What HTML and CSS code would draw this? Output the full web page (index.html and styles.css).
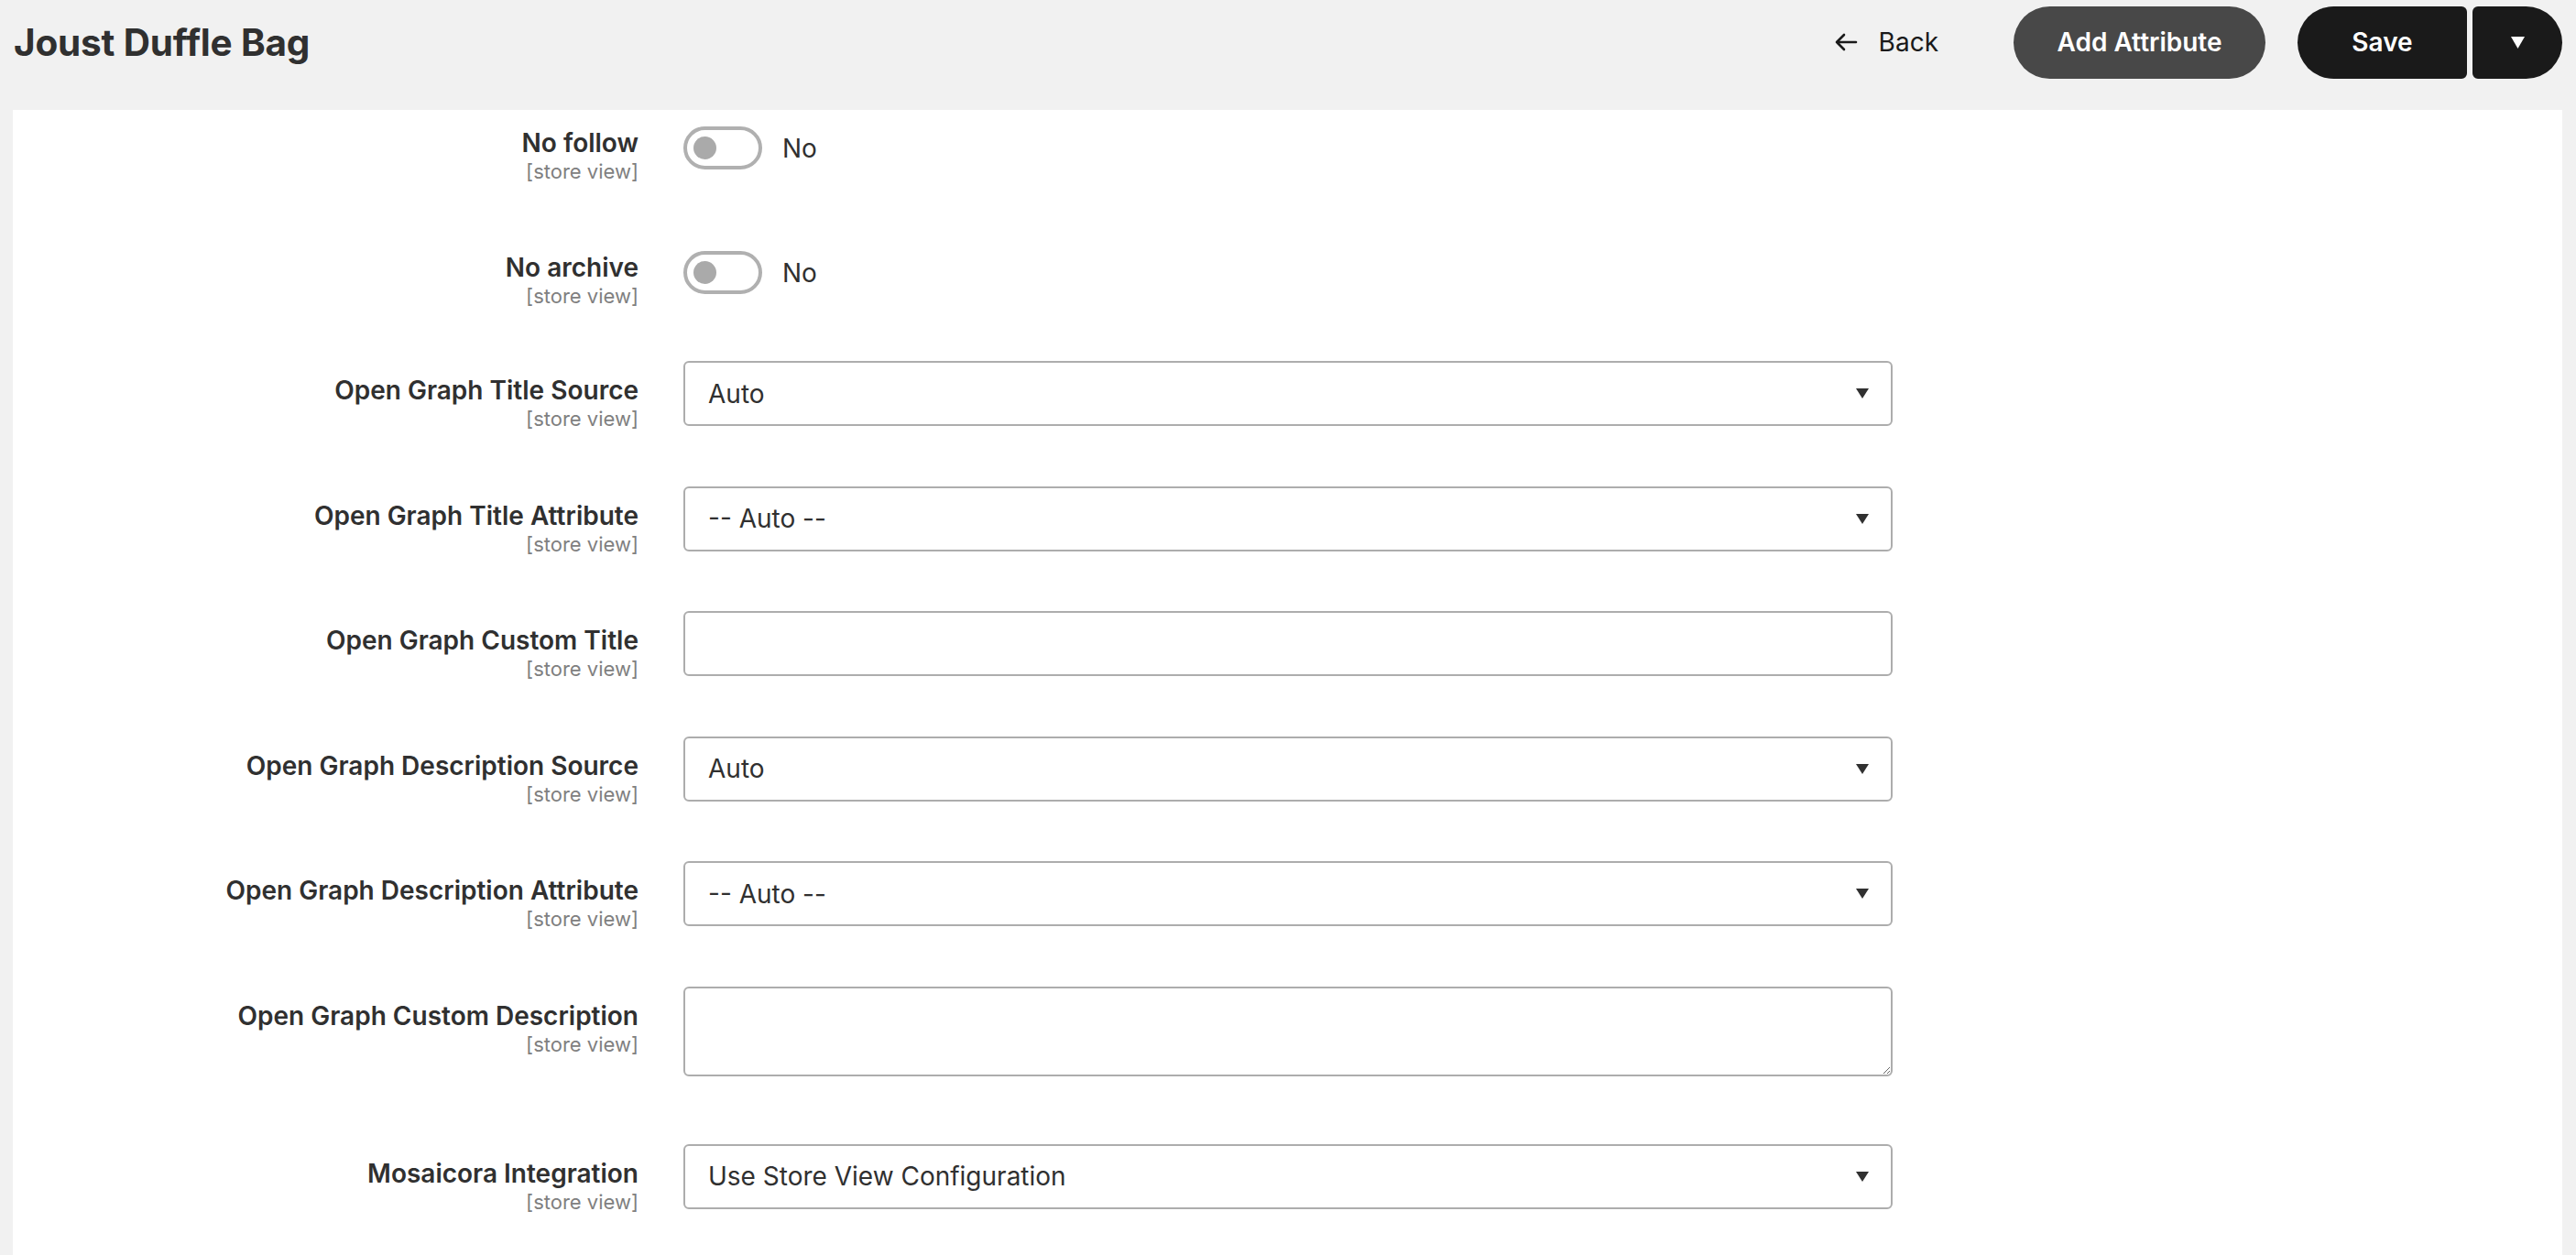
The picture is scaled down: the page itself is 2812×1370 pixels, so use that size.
FILE: index.html
```html
<!DOCTYPE html>
<html lang="en">
<head>
    <meta charset="UTF-8">
    <meta name="viewport" content="width=device-width, initial-scale=1.0">
    <title>Joust Duffle Bag</title>
    <link rel="stylesheet" href="styles.css">
</head>
<body>
    <header class="page-header">
        <h1 class="page-title">Joust Duffle Bag</h1>
        <div class="page-actions">
            <a class="back-link" href="#">
                <svg width="26" height="20" viewBox="0 0 26 20"><path d="M24 10H3M11 2L3 10l8 8" fill="none" stroke="#1a1a1a" stroke-width="2.6" stroke-linecap="round" stroke-linejoin="round"/></svg>
                <span>Back</span>
            </a>
            <button class="btn btn-secondary">Add Attribute</button>
            <div class="split-btn">
                <button class="btn btn-primary btn-save">Save</button>
                <button class="btn btn-primary btn-more"><svg width="17" height="15" viewBox="0 0 17 15"><path d="M1 1h15L8.5 14z" fill="#fff"/></svg></button>
            </div>
        </div>
    </header>

    <main class="panel">
        <div class="fieldset">
            <div class="field field-switch">
                <div class="field-label"><label>No follow</label><span class="scope">[store view]</span></div>
                <div class="field-control">
                    <span class="switch"><span class="switch-knob"></span></span>
                    <span class="switch-text">No</span>
                </div>
            </div>
            <div class="field field-switch">
                <div class="field-label"><label>No archive</label><span class="scope">[store view]</span></div>
                <div class="field-control">
                    <span class="switch"><span class="switch-knob"></span></span>
                    <span class="switch-text">No</span>
                </div>
            </div>
            <div class="field">
                <div class="field-label"><label>Open Graph Title Source</label><span class="scope">[store view]</span></div>
                <div class="select"><span>Auto</span><i class="caret"></i></div>
            </div>
            <div class="field">
                <div class="field-label"><label>Open Graph Title Attribute</label><span class="scope">[store view]</span></div>
                <div class="select"><span>-- Auto --</span><i class="caret"></i></div>
            </div>
            <div class="field">
                <div class="field-label"><label>Open Graph Custom Title</label><span class="scope">[store view]</span></div>
                <div class="input"></div>
            </div>
            <div class="field">
                <div class="field-label"><label>Open Graph Description Source</label><span class="scope">[store view]</span></div>
                <div class="select"><span>Auto</span><i class="caret"></i></div>
            </div>
            <div class="field">
                <div class="field-label"><label>Open Graph Description Attribute</label><span class="scope">[store view]</span></div>
                <div class="select"><span>-- Auto --</span><i class="caret"></i></div>
            </div>
            <div class="field field-textarea">
                <div class="field-label"><label>Open Graph Custom Description</label><span class="scope">[store view]</span></div>
                <textarea class="textarea"></textarea>
            </div>
            <div class="field">
                <div class="field-label"><label>Mosaicora Integration</label><span class="scope">[store view]</span></div>
                <div class="select"><span>Use Store View Configuration</span><i class="caret"></i></div>
            </div>
        </div>
    </main>
</body>
</html>
```

FILE: styles.css
```css
html,body,div,span,h1,label{margin:0; padding:0;}
body{background:#f1f1f1; font-family:Inter, "Noto Sans", sans-serif; color:#303030; padding:0 15px 0 14px; height:1370px; overflow:hidden; box-sizing:border-box;}

/* header */
.page-header{display:flex; align-items:center; justify-content:space-between; height:92px;}
.page-title{font-size:40.5px; font-weight:700; color:#303030; padding-left:1px; letter-spacing:-0.2px;}
.page-actions{display:flex; align-items:center;}
.back-link{display:flex; align-items:center; gap:23px; font-size:28px; color:#1a1a1a; text-decoration:none; margin-right:82px;}

.btn{height:79px; border:0; padding:0; font-family:inherit; font-size:28px; font-weight:600; color:#fff; cursor:pointer; box-sizing:border-box;}
.btn-secondary{width:275px; background:#484848; border-radius:40px;}
.split-btn{display:flex; gap:6px; margin-left:35px;}
.btn-primary{background:#1a1a1a;}
.btn-save{width:185px; border-radius:40px 6px 6px 40px;}
.btn-more{width:98px; border-radius:6px 40px 40px 6px; display:flex; align-items:center; justify-content:center;}

/* form panel */
.panel{display:block; background:#fff; margin-top:28px; height:1250px; padding-top:18px; box-sizing:border-box;}
.field{display:flex; align-items:flex-start; gap:49px; margin-bottom:60.5px;}
.field-label{width:683px; flex:none; display:flex; flex-direction:column; align-items:flex-end; padding-top:14px; text-align:right;}
.field-label label{font-size:28px; font-weight:600; line-height:36px; color:#303030;}
.scope{font-size:22px; line-height:26px; color:#808080;}

.field-switch{margin-bottom:74px;}
.field-switch:nth-child(2){margin-bottom:58px;}
.field-switch .field-label{padding-top:0;}
.field-switch .field-control{display:flex; align-items:center; gap:22px; height:47px;}
.switch{display:flex; align-items:center; width:86px; height:47px; border:4px solid #b0b0b0; border-radius:24px; padding-left:7px; box-sizing:border-box;}
.switch-knob{width:25px; height:25px; border-radius:50%; background:#aaa;}
.switch-text{font-size:28px; color:#303030;}

.select,.input,.textarea{width:1320px; height:71px; border:2px solid #adadad; border-radius:6px; box-sizing:border-box; background:#fff;}
.select{display:flex; align-items:center; justify-content:space-between; padding:0 24px 0 25px; font-size:28px; color:#303030;}
.caret{width:0; height:0; border-left:7px solid transparent; border-right:7px solid transparent; border-top:11px solid #303030;}
.textarea{display:block; height:98px; font-family:inherit; font-size:28px; margin:0;}
.field-textarea{margin-bottom:74px;}
```
